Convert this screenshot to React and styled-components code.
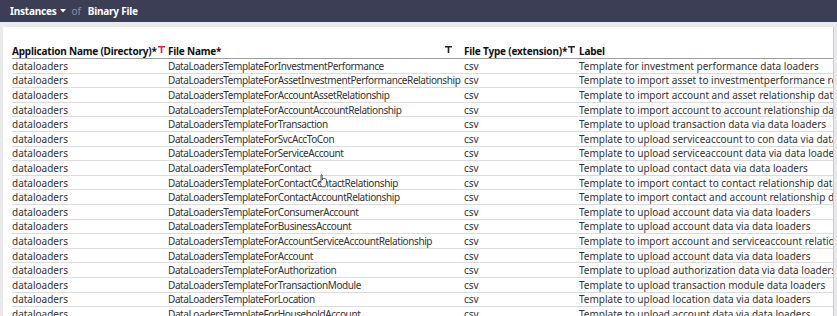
import React from "react";
import styled, { createGlobalStyle } from "styled-components";

const GlobalStyle = createGlobalStyle`
  html, body {
    margin: 0;
    padding: 0;
    background: #e9e9ec;
    overflow: hidden;
  }
  body {
    font-family: "Noto Sans", "Open Sans", sans-serif;
  }
`;

const Page = styled.div`
  width: 837px;
  height: 316px;
  display: flex;
  flex-direction: column;
  overflow: hidden;
`;

const TopBar = styled.div`
  height: 22px;
  background: #3c3e55;
  display: flex;
  align-items: center;
  padding-left: 10px;
  gap: 4px;
  font-size: 10px;
  font-weight: 700;
  letter-spacing: -0.2px;
  color: #fff;
  flex-shrink: 0;
`;

const Crumb = styled.span`
  display: flex;
  align-items: center;
  gap: 3px;
  color: ${(p) => (p.muted ? "#8d8fa3" : "#ffffff")};
  font-weight: ${(p) => (p.muted ? 400 : 700)};
  margin: ${(p) => (p.muted ? "0 3px 0 2px" : "0")};
`;

const Panel = styled.div`
  margin: 5px 3px 0 3px;
  background: #fff;
  border-right: 1px solid #c9c9cf;
  flex: 1;
  padding: 16px 0 0 9px;
`;

const Grid = styled.div`
  display: grid;
  grid-template-columns: 156px 296px 115px 1fr;
  font-size: 10px;
  color: #333;
`;

const HeadCell = styled.div`
  font-weight: 700;
  color: #111;
  height: 15px;
  letter-spacing: -0.2px;
  display: flex;
  align-items: center;
  justify-content: ${(p) => (p.spread ? "space-between" : "flex-start")};
  padding-right: ${(p) => (p.spread ? "12px" : "0")};
  border-bottom: 1px solid #9c9ca4;
  white-space: nowrap;
`;

const Cell = styled.div`
  height: 14.6px;
  box-sizing: border-box;
  display: flex;
  align-items: center;
  border-bottom: 1px solid #dcdcdf;
  white-space: nowrap;
  position: relative;
`;

const FileCell = styled(Cell)`
  letter-spacing: -0.4px;
  z-index: 1;
`;

const LabelCell = styled(Cell)`
  overflow: hidden;
`;

const Cursor = styled.svg`
  position: absolute;
  left: 150px;
  top: -2px;
  z-index: 5;
`;

const FilterIcon = ({ active }) => (
  <svg width="7" height="7" viewBox="0 0 7 7" style={{ marginLeft: 1, marginBottom: 2 }}>
    <path d="M0 0h7v1.6H4.3V7H2.7V1.6H0z" fill={active ? "#e02020" : "#222"} />
  </svg>
);

const Caret = () => (
  <svg width="6" height="4" viewBox="0 0 6 4">
    <path d="M0 0h6L3 3.5z" fill="#fff" />
  </svg>
);

const rows = [
  ["DataLoadersTemplateForInvestmentPerformance", "Template for investment performance data loaders"],
  ["DataLoadersTemplateForAssetInvestmentPerformanceRelationship", "Template to import asset to investmentperformance relationship"],
  ["DataLoadersTemplateForAccountAssetRelationship", "Template to import account and asset relationship data"],
  ["DataLoadersTemplateForAccountAccountRelationship", "Template to import account to account relationship data"],
  ["DataLoadersTemplateForTransaction", "Template to upload transaction data via data loaders"],
  ["DataLoadersTemplateForSvcAccToCon", "Template to upload serviceaccount to con data via data loaders"],
  ["DataLoadersTemplateForServiceAccount", "Template to upload serviceaccount data via data loaders"],
  ["DataLoadersTemplateForContact", "Template to upload contact data via data loaders"],
  ["DataLoadersTemplateForContactContactRelationship", "Template to import contact to contact relationship data"],
  ["DataLoadersTemplateForContactAccountRelationship", "Template to import contact and account relationship data"],
  ["DataLoadersTemplateForConsumerAccount", "Template to upload account data via data loaders"],
  ["DataLoadersTemplateForBusinessAccount", "Template to upload account data via data loaders"],
  ["DataLoadersTemplateForAccountServiceAccountRelationship", "Template to import account and serviceaccount relationship data"],
  ["DataLoadersTemplateForAccount", "Template to upload account data via data loaders"],
  ["DataLoadersTemplateForAuthorization", "Template to upload authorization data via data loaders"],
  ["DataLoadersTemplateForTransactionModule", "Template to upload transaction module data loaders"],
  ["DataLoadersTemplateForLocation", "Template to upload location data via data loaders"],
  ["DataLoadersTemplateForHouseholdAccount", "Template to upload account data via data loaders"],
];

const HandCursor = () => (
  <Cursor width="11" height="14" viewBox="0 0 11 14">
    <path
      d="M3 1.2c0-.7 1.2-.7 1.2 0V6l.3-1.3c.3-.6 1.2-.4 1.2.3l.2-.3c.4-.5 1.2-.2 1.2.4l.2-.1c.5-.3 1.2 0 1.2.6v3.6c0 1.6-.8 2.6-1.2 3.6H3.8L1.4 8.8c-.5-.7.3-1.5 1-.9L3 8.6z"
      fill="#fff"
      stroke="#222"
      strokeWidth="0.7"
    />
  </Cursor>
);

export default function App() {
  return (
    <Page>
      <GlobalStyle />
      <TopBar>
        <Crumb>
          Instances <Caret />
        </Crumb>
        <Crumb muted>of</Crumb>
        <Crumb>Binary File</Crumb>
      </TopBar>
      <Panel>
        <Grid>
          <HeadCell>
            Application Name (Directory)*
            <FilterIcon active />
          </HeadCell>
          <HeadCell spread>
            File Name*
            <FilterIcon />
          </HeadCell>
          <HeadCell>
            File Type (extension)*
            <FilterIcon />
          </HeadCell>
          <HeadCell>Label</HeadCell>
          {rows.map(([file, label], i) => (
            <React.Fragment key={file}>
              <Cell>dataloaders</Cell>
              <FileCell>
                {file}
                {i === 8 && <HandCursor />}
              </FileCell>
              <Cell>csv</Cell>
              <LabelCell>{label}</LabelCell>
            </React.Fragment>
          ))}
        </Grid>
      </Panel>
    </Page>
  );
}
